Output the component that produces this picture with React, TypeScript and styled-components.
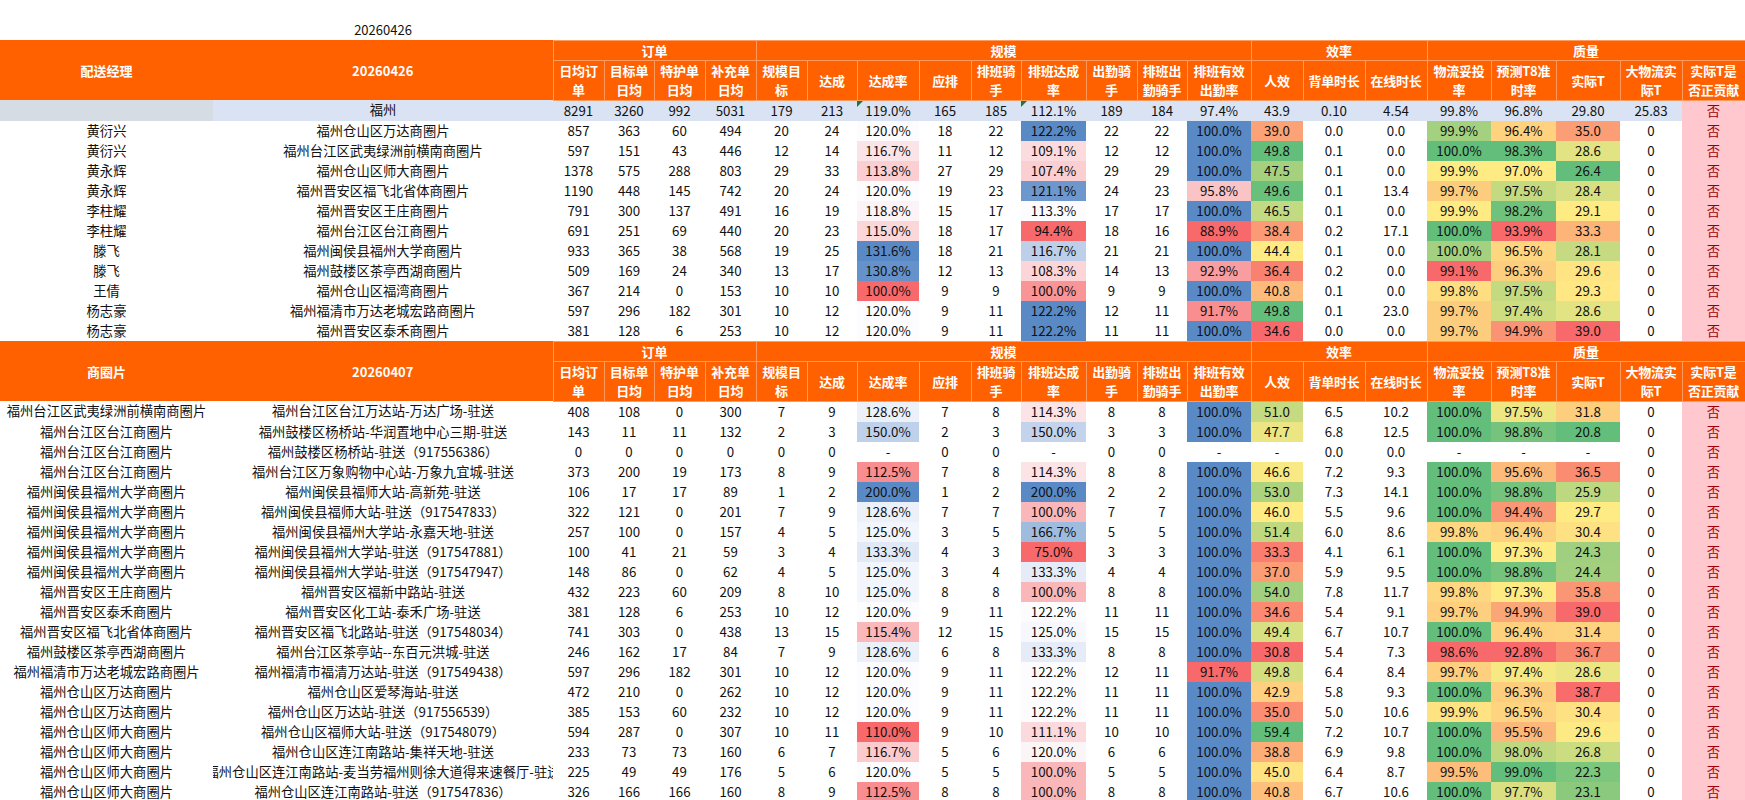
import React from 'react'
import styled, { createGlobalStyle } from 'styled-components'

const GlobalStyle = createGlobalStyle`
  html, body {
    margin: 0;
    padding: 0;
    background: #fff;
  }
  body {
    font-family: "Noto Sans CJK SC", "Noto Sans", sans-serif;
  }
`

const COL_WIDTHS = [
  213, 340, 51, 50, 51, 51, 51, 50, 62, 52, 50, 65, 51, 50, 64, 52, 62, 62, 64, 65, 64, 62, 63,
]

const GROUPS = [
  { label: '订单', span: 4 },
  { label: '规模', span: 9 },
  { label: '效率', span: 3 },
  { label: '质量', span: 5 },
]

const SUB_HEADERS: string[][] = [
  ['日均订', '单'],
  ['目标单', '日均'],
  ['特护单', '日均'],
  ['补充单', '日均'],
  ['规模目', '标'],
  ['达成'],
  ['达成率'],
  ['应排'],
  ['排班骑', '手'],
  ['排班达成', '率'],
  ['出勤骑', '手'],
  ['排班出', '勤骑手'],
  ['排班有效', '出勤率'],
  ['人效'],
  ['背单时长'],
  ['在线时长'],
  ['物流妥投', '率'],
  ['预测T8准', '时率'],
  ['实际T'],
  ['大物流实', '际T'],
  ['实际T是', '否正贡献'],
]

interface Row {
  name: string
  area: string
  values: string[]
  fine?: Record<number, number>
}

const row = (line: string, fine?: Record<number, number>): Row => {
  const [name, area, rest] = line.split('|')
  return { name, area, values: rest.split(' '), fine }
}

const SUMMARY = row(
  '|福州|8291 3260 992 5031 179 213 119.0% 165 185 112.1% 189 184 97.4% 43.9 0.10 4.54 99.8% 96.8% 29.80 25.83 否',
)

const MANAGER_ROWS: Row[] = [
  row('黄衍兴|福州仓山区万达商圈片|857 363 60 494 20 24 120.0% 18 22 122.2% 22 22 100.0% 39.0 0.0 0.0 99.9% 96.4% 35.0 0 否', { 16: 99.95 }),
  row('黄衍兴|福州台江区武夷绿洲前横南商圈片|597 151 43 446 12 14 116.7% 11 12 109.1% 12 12 100.0% 49.8 0.1 0.0 100.0% 98.3% 28.6 0 否'),
  row('黄永辉|福州仓山区师大商圈片|1378 575 288 803 29 33 113.8% 27 29 107.4% 29 29 100.0% 47.5 0.1 0.0 99.9% 97.0% 26.4 0 否', { 16: 99.88 }),
  row('黄永辉|福州晋安区福飞北省体商圈片|1190 448 145 742 20 24 120.0% 19 23 121.1% 24 23 95.8% 49.6 0.1 13.4 99.7% 97.5% 28.4 0 否'),
  row('李柱耀|福州晋安区王庄商圈片|791 300 137 491 16 19 118.8% 15 17 113.3% 17 17 100.0% 46.5 0.1 0.0 99.9% 98.2% 29.1 0 否', { 16: 99.88 }),
  row('李柱耀|福州台江区台江商圈片|691 251 69 440 20 23 115.0% 18 17 94.4% 18 16 88.9% 38.4 0.2 17.1 100.0% 93.9% 33.3 0 否'),
  row('滕飞|福州闽侯县福州大学商圈片|933 365 38 568 19 25 131.6% 18 21 116.7% 21 21 100.0% 44.4 0.1 0.0 100.0% 96.5% 28.1 0 否', { 16: 99.95 }),
  row('滕飞|福州鼓楼区茶亭西湖商圈片|509 169 24 340 13 17 130.8% 12 13 108.3% 14 13 92.9% 36.4 0.2 0.0 99.1% 96.3% 29.6 0 否'),
  row('王倩|福州仓山区福湾商圈片|367 214 0 153 10 10 100.0% 9 9 100.0% 9 9 100.0% 40.8 0.1 0.0 99.8% 97.5% 29.3 0 否'),
  row('杨志豪|福州福清市万达老城宏路商圈片|597 296 182 301 10 12 120.0% 9 11 122.2% 12 11 91.7% 49.8 0.1 23.0 99.7% 97.4% 28.6 0 否'),
  row('杨志豪|福州晋安区泰禾商圈片|381 128 6 253 10 12 120.0% 9 11 122.2% 11 11 100.0% 34.6 0.0 0.0 99.7% 94.9% 39.0 0 否'),
]

const ZONE_ROWS: Row[] = [
  row('福州台江区武夷绿洲前横南商圈片|福州台江区台江万达站-万达广场-驻送|408 108 0 300 7 9 128.6% 7 8 114.3% 8 8 100.0% 51.0 6.5 10.2 100.0% 97.5% 31.8 0 否'),
  row('福州台江区台江商圈片|福州鼓楼区杨桥站-华润置地中心三期-驻送|143 11 11 132 2 3 150.0% 2 3 150.0% 3 3 100.0% 47.7 6.8 12.5 100.0% 98.8% 20.8 0 否'),
  row('福州台江区台江商圈片|福州鼓楼区杨桥站-驻送（917556386）|0 0 0 0 0 0 - 0 0 - 0 0 - - 0.0 0.0 - - - 0 否'),
  row('福州台江区台江商圈片|福州台江区万象购物中心站-万象九宜城-驻送|373 200 19 173 8 9 112.5% 7 8 114.3% 8 8 100.0% 46.6 7.2 9.3 100.0% 95.6% 36.5 0 否'),
  row('福州闽侯县福州大学商圈片|福州闽侯县福师大站-高新苑-驻送|106 17 17 89 1 2 200.0% 1 2 200.0% 2 2 100.0% 53.0 7.3 14.1 100.0% 98.8% 25.9 0 否'),
  row('福州闽侯县福州大学商圈片|福州闽侯县福师大站-驻送（917547833）|322 121 0 201 7 9 128.6% 7 7 100.0% 7 7 100.0% 46.0 5.5 9.6 100.0% 94.4% 29.7 0 否'),
  row('福州闽侯县福州大学商圈片|福州闽侯县福州大学站-永嘉天地-驻送|257 100 0 157 4 5 125.0% 3 5 166.7% 5 5 100.0% 51.4 6.0 8.6 99.8% 96.4% 30.4 0 否'),
  row('福州闽侯县福州大学商圈片|福州闽侯县福州大学站-驻送（917547881）|100 41 21 59 3 4 133.3% 4 3 75.0% 3 3 100.0% 33.3 4.1 6.1 100.0% 97.3% 24.3 0 否'),
  row('福州闽侯县福州大学商圈片|福州闽侯县福州大学站-驻送（917547947）|148 86 0 62 4 5 125.0% 3 4 133.3% 4 4 100.0% 37.0 5.9 9.5 100.0% 98.8% 24.4 0 否'),
  row('福州晋安区王庄商圈片|福州晋安区福新中路站-驻送|432 223 60 209 8 10 125.0% 8 8 100.0% 8 8 100.0% 54.0 7.8 11.7 99.8% 97.3% 35.8 0 否'),
  row('福州晋安区泰禾商圈片|福州晋安区化工站-泰禾广场-驻送|381 128 6 253 10 12 120.0% 9 11 122.2% 11 11 100.0% 34.6 5.4 9.1 99.7% 94.9% 39.0 0 否'),
  row('福州晋安区福飞北省体商圈片|福州晋安区福飞北路站-驻送（917548034）|741 303 0 438 13 15 115.4% 12 15 125.0% 15 15 100.0% 49.4 6.7 10.7 100.0% 96.4% 31.4 0 否'),
  row('福州鼓楼区茶亭西湖商圈片|福州台江区茶亭站--东百元洪城-驻送|246 162 17 84 7 9 128.6% 6 8 133.3% 8 8 100.0% 30.8 5.4 7.3 98.6% 92.8% 36.7 0 否'),
  row('福州福清市万达老城宏路商圈片|福州福清市福清万达站-驻送（917549438）|597 296 182 301 10 12 120.0% 9 11 122.2% 12 11 91.7% 49.8 6.4 8.4 99.7% 97.4% 28.6 0 否'),
  row('福州仓山区万达商圈片|福州仓山区爱琴海站-驻送|472 210 0 262 10 12 120.0% 9 11 122.2% 11 11 100.0% 42.9 5.8 9.3 100.0% 96.3% 38.7 0 否'),
  row('福州仓山区万达商圈片|福州仓山区万达站-驻送（917556539）|385 153 60 232 10 12 120.0% 9 11 122.2% 11 11 100.0% 35.0 5.0 10.6 99.9% 96.5% 30.4 0 否'),
  row('福州仓山区师大商圈片|福州仓山区福师大站-驻送（917548079）|594 287 0 307 10 11 110.0% 9 10 111.1% 10 10 100.0% 59.4 7.2 10.7 100.0% 95.5% 29.6 0 否'),
  row('福州仓山区师大商圈片|福州仓山区连江南路站-集祥天地-驻送|233 73 73 160 6 7 116.7% 5 6 120.0% 6 6 100.0% 38.8 6.9 9.8 100.0% 98.0% 26.8 0 否'),
  row('福州仓山区师大商圈片|福州仓山区连江南路站-麦当劳福州则徐大道得来速餐厅-驻送|225 49 49 176 5 6 120.0% 5 5 100.0% 5 5 100.0% 45.0 6.4 8.7 99.5% 99.0% 22.3 0 否'),
  row('福州仓山区师大商圈片|福州仓山区连江南路站-驻送（917547836）|326 166 166 160 8 9 112.5% 8 8 100.0% 8 8 100.0% 40.8 6.7 10.6 100.0% 97.7% 23.1 0 否'),
]

// Excel style three colour scales (min / 50th percentile / max)
type Rgb = [number, number, number]
const RED: Rgb = [248, 105, 107]
const WHITE: Rgb = [252, 252, 255]
const BLUE: Rgb = [90, 138, 198]
const YELLOW: Rgb = [255, 235, 132]
const GREEN: Rgb = [99, 190, 123]

const SCALES: Record<number, [Rgb, Rgb, Rgb]> = {
  6: [RED, WHITE, BLUE],
  9: [RED, WHITE, BLUE],
  12: [RED, WHITE, BLUE],
  13: [RED, YELLOW, GREEN],
  16: [RED, YELLOW, GREEN],
  17: [RED, YELLOW, GREEN],
  18: [GREEN, YELLOW, RED],
}

const FLAG_COLUMNS = [6, 9]
const VERDICT_COLUMN = 20

const mix = (a: Rgb, b: Rgb, t: number) =>
  `rgb(${a.map((c, i) => Math.round(c + (b[i] - c) * t)).join(',')})`

const numberOf = (r: Row, col: number) => r.fine?.[col] ?? parseFloat(r.values[col])

function scaleColours(rows: Row[]): Record<number, string>[] {
  const out: Record<number, string>[] = rows.map(() => ({}))
  Object.entries(SCALES).forEach(([key, [low, mid, high]]) => {
    const col = Number(key)
    const nums = rows.map((r) => numberOf(r, col))
    const sorted = nums.filter((n) => !isNaN(n)).sort((a, b) => a - b)
    const min = sorted[0]
    const max = sorted[sorted.length - 1]
    const pos = (sorted.length - 1) / 2
    const median =
      sorted[Math.floor(pos)] + (sorted[Math.ceil(pos)] - sorted[Math.floor(pos)]) * (pos - Math.floor(pos))
    nums.forEach((v, i) => {
      if (isNaN(v)) return
      if (v >= median) {
        const t = max === median ? 1 : (v - median) / (max - median)
        out[i][col] = mix(mid, high, t)
      } else {
        const t = (median - v) / (median - min)
        out[i][col] = mix(mid, low, t)
      }
    })
  })
  return out
}

const Sheet = styled.table`
  width: 1745px;
  table-layout: fixed;
  border-collapse: collapse;
  border-spacing: 0;
  font-size: 13.3px;
  color: #111;
`

const TitleRow = styled.tr`
  height: 40px;
`

const TitleCell = styled.td`
  padding: 0 0 1px;
  vertical-align: bottom;
  text-align: center;
  font-size: 13px;
  line-height: 19px;
`

const GroupRow = styled.tr`
  height: 20px;
`

const LabelRow = styled.tr`
  height: 40px;
`

const HeadCell = styled.th<{ $lined?: boolean }>`
  padding: 0;
  background: #ff6000;
  color: #fff;
  font-weight: 700;
  font-size: 13px;
  line-height: 19px;
  text-align: center;
  vertical-align: middle;
  white-space: nowrap;
  overflow: hidden;
  border: ${(p) => (p.$lined ? '1px solid #ff9b5e' : 'none')};
`

const HeadLine = styled.div`
  letter-spacing: -0.2px;
`

const BodyRow = styled.tr`
  height: 20px;
`

const Cell = styled.td<{ $bg?: string; $verdict?: boolean }>`
  position: relative;
  padding: 0;
  height: 20px;
  line-height: 20px;
  text-align: center;
  white-space: nowrap;
  overflow: hidden;
  background: ${(p) => (p.$verdict ? '#ffc7ce' : p.$bg ?? 'transparent')};
  color: ${(p) => (p.$verdict ? '#9c0006' : 'inherit')};
`

const Clip = styled.div`
  display: flex;
  justify-content: center;
  overflow: hidden;
  white-space: nowrap;
`

const Flag = styled.span`
  position: absolute;
  top: 0;
  left: 0;
  width: 0;
  height: 0;
  border-top: 6px solid #1b7b35;
  border-right: 6px solid transparent;
`

function SectionHeader({ first, date }: { first: string; date: string }) {
  return (
    <>
      <GroupRow>
        <HeadCell rowSpan={2}>{first}</HeadCell>
        <HeadCell rowSpan={2}>{date}</HeadCell>
        {GROUPS.map((g) => (
          <HeadCell key={g.label} colSpan={g.span} $lined>
            {g.label}
          </HeadCell>
        ))}
      </GroupRow>
      <LabelRow>
        {SUB_HEADERS.map((lines, i) => (
          <HeadCell key={i} $lined>
            {lines.map((l) => (
              <HeadLine key={l}>{l}</HeadLine>
            ))}
          </HeadCell>
        ))}
      </LabelRow>
    </>
  )
}

function DataRow({ data, colours }: { data: Row; colours: Record<number, string> }) {
  return (
    <BodyRow>
      <Cell>
        <Clip>{data.name}</Clip>
      </Cell>
      <Cell>
        <Clip>{data.area}</Clip>
      </Cell>
      {data.values.map((v, i) => (
        <Cell key={i} $bg={colours[i]} $verdict={i === VERDICT_COLUMN}>
          {v}
        </Cell>
      ))}
    </BodyRow>
  )
}

function SummaryRow({ data }: { data: Row }) {
  return (
    <BodyRow>
      <Cell $bg="#d6dce4" />
      <Cell $bg="#dae3f3">{data.area}</Cell>
      {data.values.map((v, i) => (
        <Cell key={i} $bg="#dae3f3" $verdict={i === VERDICT_COLUMN}>
          {FLAG_COLUMNS.includes(i) && <Flag />}
          {v}
        </Cell>
      ))}
    </BodyRow>
  )
}

export default function App() {
  const managerColours = scaleColours(MANAGER_ROWS)
  const zoneColours = scaleColours(ZONE_ROWS)

  return (
    <>
      <GlobalStyle />
      <Sheet>
        <colgroup>
          {COL_WIDTHS.map((w, i) => (
            <col key={i} style={{ width: w }} />
          ))}
        </colgroup>
        <tbody>
          <TitleRow>
            <TitleCell />
            <TitleCell>20260426</TitleCell>
            <TitleCell colSpan={21} />
          </TitleRow>
          <SectionHeader first="配送经理" date="20260426" />
          <SummaryRow data={SUMMARY} />
          {MANAGER_ROWS.map((r, i) => (
            <DataRow key={i} data={r} colours={managerColours[i]} />
          ))}
          <SectionHeader first="商圈片" date="20260407" />
          {ZONE_ROWS.map((r, i) => (
            <DataRow key={i} data={r} colours={zoneColours[i]} />
          ))}
        </tbody>
      </Sheet>
    </>
  )
}
